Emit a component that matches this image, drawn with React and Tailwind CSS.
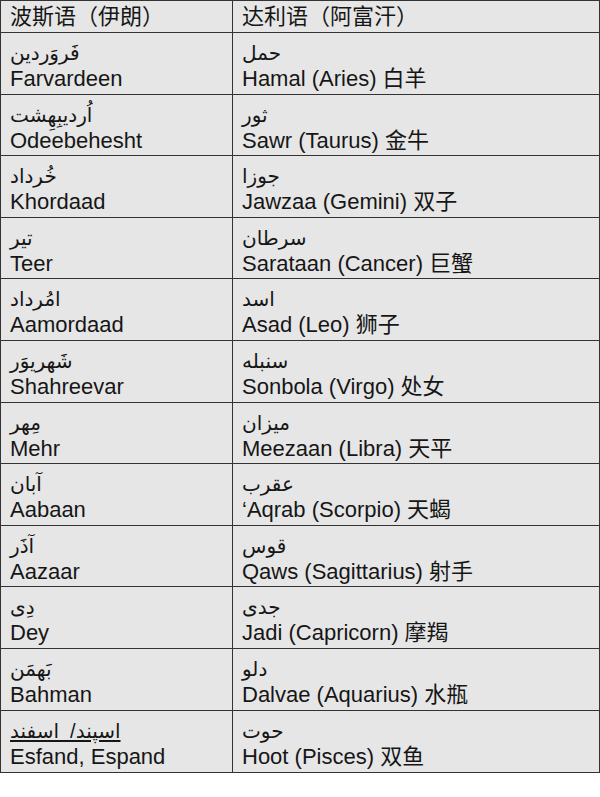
import React from "react";

const rows = [
  ["فَروَردین", "Farvardeen", "حمل", "Hamal (Aries) 白羊"],
  ["اُردیبِهِشت", "Odeebehesht", "ثور", "Sawr (Taurus) 金牛"],
  ["خُرداد", "Khordaad", "جوزا", "Jawzaa (Gemini) 双子"],
  ["تیر", "Teer", "سرطان", "Sarataan (Cancer) 巨蟹"],
  ["امُرداد", "Aamordaad", "اسد", "Asad (Leo) 狮子"],
  ["شَهریوَر", "Shahreevar", "سنبله", "Sonbola (Virgo) 处女"],
  ["مِهر", "Mehr", "میزان", "Meezaan (Libra) 天平"],
  ["آبان", "Aabaan", "عقرب", "‘Aqrab (Scorpio) 天蝎"],
  ["آذَر", "Aazaar", "قوس", "Qaws (Sagittarius) 射手"],
  ["دِی", "Dey", "جدی", "Jadi (Capricorn) 摩羯"],
  ["بَهمَن", "Bahman", "دلو", "Dalvae (Aquarius) 水瓶"],
  ["اسپند/  اسفند", "Esfand, Espand", "حوت", "Hoot (Pisces) 双鱼", true],
];

const font = {
  fontFamily: '"Liberation Sans", "DejaVu Sans", "Noto Sans CJK SC", sans-serif',
};

function Cell({ ar, en, last, underline }) {
  return (
    <div className={`pl-[9px] pt-[7px] ${last ? "" : "border-r border-[#333]"}`}>
      <div className="flex h-[26px]">
        <span
          dir="rtl"
          className={`text-[20px] leading-[26px] whitespace-pre ${underline ? "underline underline-offset-2" : ""}`}
        >
          {ar}
        </span>
      </div>
      <div className="text-[22px] leading-[26px] h-[26px]">{en}</div>
    </div>
  );
}

export default function App() {
  return (
    <div className="w-[600px] h-[797px] bg-white text-[#161616]" style={font}>
      <div className="bg-[#e6e6e6] border border-[#333] w-[600px]">
        <div className="grid grid-cols-[232px_1fr] h-[32px] border-b border-[#333]">
          <div className="border-r border-[#333] pl-[9px] text-[22px] leading-[31px]">波斯语（伊朗）</div>
          <div className="pl-[9px] text-[22px] leading-[31px]">达利语（阿富汗）</div>
        </div>
        {rows.map((r, i) => (
          <div
            key={i}
            className={`grid grid-cols-[232px_1fr] h-[61.6px] ${i < rows.length - 1 ? "border-b border-[#333]" : ""}`}
          >
            <Cell ar={r[0]} en={r[1]} underline={r[4]} />
            <Cell ar={r[2]} en={r[3]} last />
          </div>
        ))}
      </div>
    </div>
  );
}
